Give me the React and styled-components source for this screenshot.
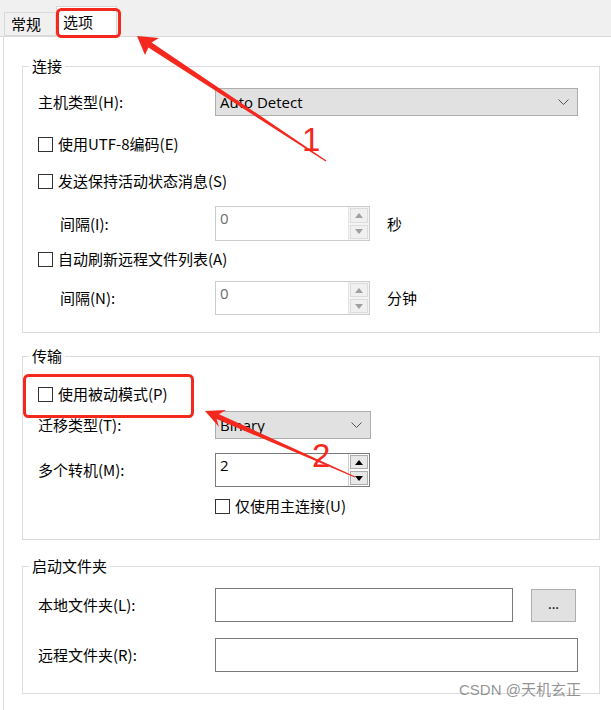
import React from 'react';
import styled, { createGlobalStyle } from 'styled-components';

const GlobalStyle = createGlobalStyle`
  html, body {
    margin: 0;
    padding: 0;
    background: #fff;
  }
  body {
    font-family: "Noto Sans CJK SC", "Noto Sans", sans-serif;
    font-size: 15px;
    color: #000;
  }
`;

const Page = styled.div`
  position: relative;
  width: 611px;
  height: 710px;
  overflow: hidden;
  background: #fff;
  display: flex;
  flex-direction: column;
`;

const TabStrip = styled.div`
  height: 37px;
  flex-shrink: 0;
  box-sizing: border-box;
  background: #f0f0f0;
  border-bottom: 1px solid #d9d9d9;
  display: flex;
  align-items: flex-end;
  padding-left: 4px;
`;

const Tab = styled.div`
  box-sizing: border-box;
  height: ${({ $active }) => ($active ? '31px' : '24px')};
  width: ${({ $active }) => ($active ? '61px' : '52px')};
  margin-bottom: ${({ $active }) => ($active ? '-1px' : '0')};
  padding-left: 6px;
  display: flex;
  align-items: center;
  background: ${({ $active }) => ($active ? '#fff' : '#f0f0f0')};
  border: 1px solid #d9d9d9;
  border-bottom: ${({ $active }) => ($active ? 'none' : '1px solid #d9d9d9')};
  font-size: 15px;
  line-height: 20px;
`;

const Panel = styled.div`
  flex: 1;
  margin-left: 3px;
  border-left: 1px solid #d9d9d9;
  padding: 0 11px 0 18px;
`;

const Group = styled.fieldset`
  margin: ${({ $mt }) => $mt}px 0 0 0;
  padding: 0;
  border: 1px solid #dcdcdc;
  min-width: 0;
`;

const Legend = styled.legend`
  margin-left: 6px;
  padding: 0 3px;
  font-size: 15px;
  line-height: 20px;
`;

const GroupBody = styled.div`
  padding: 0 0 ${({ $pb }) => $pb}px 15px;
`;

const Row = styled.div`
  display: flex;
  align-items: center;
  height: ${({ $h }) => $h}px;
  margin-top: ${({ $mt }) => $mt}px;
  margin-left: ${({ $ml }) => $ml || 0}px;
`;

const Label = styled.div`
  width: ${({ $w }) => $w}px;
  flex-shrink: 0;
  margin-left: ${({ $indent }) => $indent || 0}px;
  line-height: 20px;
  white-space: nowrap;
`;

const Dropdown = styled.div`
  box-sizing: border-box;
  width: ${({ $w }) => $w}px;
  height: 28px;
  background: #e1e1e1;
  border: 1px solid #adadad;
  display: flex;
  align-items: center;
  justify-content: space-between;
  padding: 0 8px 0 4px;
  font-family: "Open Sans", "Noto Sans", sans-serif;
  font-size: 15px;
`;

const Chevron = () => (
  <svg width="11" height="7" viewBox="0 0 11 7">
    <path d="M0.5 0.5 L5.5 5.5 L10.5 0.5" fill="none" stroke="#555" strokeWidth="1" />
  </svg>
);

const Spin = styled.div`
  box-sizing: border-box;
  width: 155px;
  height: ${({ $h }) => $h}px;
  display: flex;
  background: #fff;
  border: 1px solid ${({ $disabled }) => ($disabled ? '#cccccc' : '#7a7a7a')};
`;

const SpinValue = styled.div`
  flex: 1;
  padding: 1px 4px;
  font-family: "Open Sans", "Noto Sans", sans-serif;
  font-size: 15px;
  line-height: 20px;
  color: ${({ $disabled }) => ($disabled ? '#6d6d6d' : '#000')};
`;

const SpinButtons = styled.div`
  width: 20px;
  display: flex;
  flex-direction: column;
  background: ${({ $disabled }) => ($disabled ? '#f4f4f4' : '#fff')};
  border-left: 1px solid ${({ $disabled }) => ($disabled ? '#e4e4e4' : '#d0d0d0')};
`;

const SpinButton = styled.div`
  flex: 1;
  display: flex;
  align-items: center;
  justify-content: center;
  margin: 1px;
  background: ${({ $disabled }) => ($disabled ? '#f0f0f0' : '#e8e8e8')};
  border: 1px solid ${({ $disabled }) => ($disabled ? '#dcdcdc' : '#adadad')};
`;

const Arrow = styled.span`
  width: 0;
  height: 0;
  border-left: 4px solid transparent;
  border-right: 4px solid transparent;
  ${({ $dir, $disabled }) =>
    $dir === 'up'
      ? `border-bottom: 5px solid ${$disabled ? '#a0a0a0' : '#000'};`
      : `border-top: 5px solid ${$disabled ? '#a0a0a0' : '#000'};`}
`;

const Unit = styled.span`
  margin-left: 17px;
  line-height: 20px;
`;

const Box = styled.span`
  box-sizing: border-box;
  width: 15px;
  height: 15px;
  border: 1px solid #333;
  background: #fff;
  flex-shrink: 0;
`;

const CheckText = styled.span`
  margin-left: 5px;
  line-height: 20px;
  white-space: nowrap;
`;

const TextField = styled.div`
  box-sizing: border-box;
  width: ${({ $w }) => $w}px;
  height: 34px;
  border: 1px solid #7a7a7a;
  background: #fff;
`;

const BrowseButton = styled.div`
  box-sizing: border-box;
  width: 45px;
  height: 33px;
  margin-left: 18px;
  background: #e1e1e1;
  border: 1px solid #adadad;
  display: flex;
  align-items: center;
  justify-content: center;
  font-family: "Open Sans", "Noto Sans", sans-serif;
  font-size: 14px;
  padding-bottom: 4px;
`;

const Overlay = styled.svg`
  position: absolute;
  left: 0;
  top: 0;
  pointer-events: none;
`;

const Watermark = styled.div`
  position: absolute;
  left: 459px;
  top: 680px;
  color: rgba(128, 128, 128, 0.85);
  font-size: 15px;
  line-height: 20px;
  font-family: "Liberation Sans", "Noto Sans CJK SC", sans-serif;
`;

const SpinBox = ({ value, h, disabled }) => (
  <Spin $h={h} $disabled={disabled}>
    <SpinValue $disabled={disabled}>{value}</SpinValue>
    <SpinButtons $disabled={disabled}>
      <SpinButton $disabled={disabled}><Arrow $dir="up" $disabled={disabled} /></SpinButton>
      <SpinButton $disabled={disabled}><Arrow $dir="down" $disabled={disabled} /></SpinButton>
    </SpinButtons>
  </Spin>
);

const Check = ({ label, mt, ml }) => (
  <Row $h={22} $mt={mt} $ml={ml}>
    <Box />
    <CheckText>{label}</CheckText>
  </Row>
);

const RED = '#f5281e';

// red markup drawn on top of the dialog (highlight boxes, arrows, step numbers)
const Annotations = () => (
  <Overlay width="611" height="710" viewBox="0 0 611 710">
    <rect x="57.5" y="9.5" width="62" height="27" rx="4" fill="none" stroke={RED} strokeWidth="3" />
    <rect x="24.5" y="375.5" width="168" height="41" rx="4" fill="none" stroke={RED} strokeWidth="3" />
    <polygon points="137,36 159,38 151.6,42.6 326.4,160.4 325.6,161.6 148.4,47.4 145,55" fill={RED} />
    <polygon points="205,411 226,410 219,414.2 355.2,476.5 354.8,477.5 216.6,419 219,427" fill={RED} />
    <text x="302" y="151" fill={RED} fontSize="33" fontFamily="Liberation Sans, sans-serif">1</text>
    <text x="312" y="467" fill={RED} fontSize="33" fontFamily="Liberation Sans, sans-serif">2</text>
  </Overlay>
);

export default function App() {
  return (
    <Page>
      <GlobalStyle />
      <TabStrip>
        <Tab>常规</Tab>
        <Tab $active>选项</Tab>
      </TabStrip>
      <Panel>
        <Group $mt={19}>
          <Legend>连接</Legend>
          <GroupBody $pb={17}>
            <Row $h={28} $mt={12}>
              <Label $w={177}>主机类型(H):</Label>
              <Dropdown $w={363}>
                <span>Auto Detect</span>
                <Chevron />
              </Dropdown>
            </Row>
            <Check label="使用UTF-8编码(E)" mt={17} />
            <Check label="发送保持活动状态消息(S)" mt={15} />
            <Row $h={35} $mt={14}>
              <Label $w={155} $indent={22}>间隔(I):</Label>
              <SpinBox value="0" h={35} disabled />
              <Unit>秒</Unit>
            </Row>
            <Check label="自动刷新远程文件列表(A)" mt={7} />
            <Row $h={34} $mt={11}>
              <Label $w={155} $indent={22}>间隔(N):</Label>
              <SpinBox value="0" h={34} disabled />
              <Unit>分钟</Unit>
            </Row>
          </GroupBody>
        </Group>

        <Group $mt={13}>
          <Legend>传输</Legend>
          <GroupBody $pb={22}>
            <Check label="使用被动模式(P)" mt={17} />
            <Row $h={28} $mt={6}>
              <Label $w={177}>迁移类型(T):</Label>
              <Dropdown $w={156}>
                <span>Binary</span>
                <Chevron />
              </Dropdown>
            </Row>
            <Row $h={34} $mt={14}>
              <Label $w={177}>多个转机(M):</Label>
              <SpinBox value="2" h={34} />
            </Row>
            <Check label="仅使用主连接(U)" mt={8} ml={177} />
          </GroupBody>
        </Group>

        <Group $mt={16}>
          <Legend>启动文件夹</Legend>
          <GroupBody $pb={21}>
            <Row $h={34} $mt={12}>
              <Label $w={177}>本地文件夹(L):</Label>
              <TextField $w={298} />
              <BrowseButton>...</BrowseButton>
            </Row>
            <Row $h={34} $mt={16}>
              <Label $w={177}>远程文件夹(R):</Label>
              <TextField $w={363} />
            </Row>
          </GroupBody>
        </Group>
      </Panel>
      <Annotations />
      <Watermark>CSDN @天机玄正</Watermark>
    </Page>
  );
}
